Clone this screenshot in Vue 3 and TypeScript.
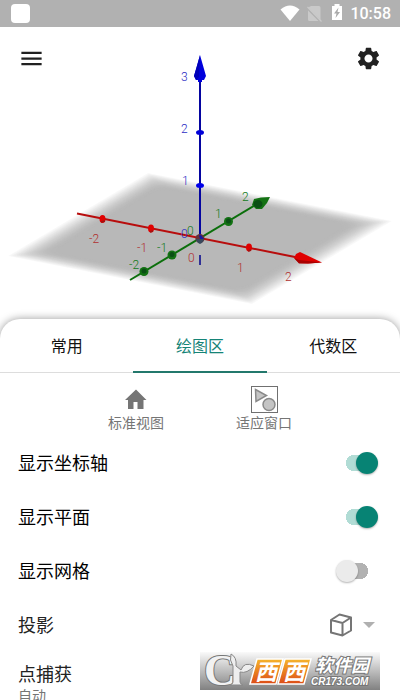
<script setup lang="ts">
import { ref } from 'vue'

interface Tick { x: number; y: number; text: string; axis: string }
interface Layer { inset: number; size: number; radius: number; fill: string }
interface Toggle { id: string; label: string; on: boolean }

const tabs = ['常用', '绘图区', '代数区']
const activeTab = ref(1)

const toggles = ref<Toggle[]>([
  { id: 'axes', label: '显示坐标轴', on: true },
  { id: 'plane', label: '显示平面', on: true },
  { id: 'grid', label: '显示网格', on: false },
])

const ticks: Tick[] = [
  { x: 181, y: 81, text: '3', axis: 'z' },
  { x: 181, y: 133, text: '2', axis: 'z' },
  { x: 182, y: 185, text: '1', axis: 'z' },
  { x: 181, y: 238, text: '0', axis: 'z' },
  { x: 187, y: 235, text: '0', axis: 'y' },
  { x: 215, y: 218, text: '1', axis: 'y' },
  { x: 242, y: 201, text: '2', axis: 'y' },
  { x: 157, y: 252, text: '-1', axis: 'y' },
  { x: 129, y: 269, text: '-2', axis: 'y' },
  { x: 89, y: 243, text: '-2', axis: 'x' },
  { x: 137, y: 252, text: '-1', axis: 'x' },
  { x: 188, y: 262, text: '0', axis: 'x' },
  { x: 237, y: 272, text: '1', axis: 'x' },
  { x: 285, y: 281, text: '2', axis: 'x' },
]

// The plane fades to white at its border through nested layers.
const steps = 24
const layers: Layer[] = Array.from({ length: steps }, (_, k) => {
  const t = (k + 1) / steps
  const inset = k * 0.5
  const grey = Math.round(255 - 71 * Math.sin((t * Math.PI) / 2))
  return { inset, size: 100 - inset * 2, radius: k * 0.25, fill: `rgb(${grey},${grey},${grey})` }
})
</script>

<template>
  <div class="app">
    <div class="status">
      <span class="notice"></span>
      <svg class="signals" viewBox="280 0 64 27" aria-hidden="true">
        <path d="M280.500 9.500Q290 1.500 299.500 9.500L290 21Z" fill="#fff" />
        <path d="M311 6h8q1.500 0 1.500 1.500V20L308 7.500ZM308 10.500L318.500 21H309.500Q308 21 308 19.500Z" fill="#c9c9c9" />
        <path d="M307.500 7L321.500 21.500" stroke="#c9c9c9" stroke-width="1.200" />
        <path d="M334.500 4h5v2h2.500v14h-10V6h2.500z" fill="#fff" />
        <path d="M338.500 7.500L334 13.500h2.500L335.500 18L340 12h-2.500z" fill="#aaa" />
      </svg>
      <time>10:58</time>
    </div>

    <div class="view">
      <svg class="scene" viewBox="0 27 400 292" role="img" aria-label="3D">
        <g transform="matrix(1.4 -0.83 2.44 0.48 8 256)">
          <rect v-for="(l, i) in layers" :key="i" :x="l.inset" :y="l.inset" :width="l.size" :height="l.size" :rx="l.radius" :fill="l.fill" />
        </g>
        <path d="M200 255V265" stroke="#2f2f96" stroke-width="2" />
        <path d="M77 213.500L300 258" stroke="#b80d0d" stroke-width="2" />
        <path d="M130 280L262 201" stroke="#0b6f0b" stroke-width="2" />
        <g fill="#e00000">
          <ellipse cx="102.500" cy="219" rx="3" ry="4" />
          <ellipse cx="151" cy="228.500" rx="3" ry="4" />
          <ellipse cx="249" cy="247.500" rx="3" ry="4" />
          <path d="M300 252L322 262.500L308 263.500L299 263L294 258L296 254Z" />
        </g>
        <path d="M294 258L299 260L322 262.500L308 263.500H299Z" fill="#a90000" />
        <path d="M101 222l4-1M150 232l3-1M248 251l3-1" stroke="#9d1414" stroke-width="1.500" />
        <g fill="#137213">
          <circle cx="144" cy="271.500" r="4.500" />
          <circle cx="172" cy="255" r="4.500" />
          <circle cx="228.500" cy="221.500" r="4.500" />
          <path d="M252 205L254 199L261 197.500L270 197L267 203L262 209H256Z" />
        </g>
        <g fill="#0b4f15">
          <circle cx="144" cy="271" r="2.500" />
          <circle cx="172" cy="254.500" r="2.500" />
          <circle cx="228.500" cy="221" r="2.500" />
          <ellipse cx="258" cy="204" rx="4.500" ry="4" />
        </g>
        <path d="M200 78V238" stroke="#0505a0" stroke-width="2" />
        <circle cx="200" cy="238.500" r="4.500" fill="#663238" />
        <path d="M196 239h8q-1 4-4 5q-3-1-4-5" fill="#38485c" />
        <path d="M199 235h2l3 4h-4z" fill="#1717a0" />
        <path d="M200 55L206 76L204 80H202V82H198V80H196L194 76Z" fill="#0000dc" />
        <path d="M200 55L197 66L194 76L196 80L199 77Z" fill="#0000b8" />
        <ellipse cx="200" cy="132.500" rx="4" ry="2.500" fill="#0000d8" />
        <ellipse cx="200" cy="185.500" rx="4" ry="2.500" fill="#0000e8" />
        <text v-for="(t, i) in ticks" :key="i" :x="t.x" :y="t.y" :class="['tick', t.axis]">{{ t.text }}</text>
      </svg>
      <header class="toolbar">
        <button type="button" aria-label="菜单">
          <svg viewBox="0 0 24 24"><path d="M3 18h18v-2H3v2zm0-5h18v-2H3v2zm0-7v2h18V6H3z" /></svg>
        </button>
        <button type="button" aria-label="设置">
          <svg viewBox="0 0 24 24"><path d="M19.140 12.940c.040-.300.060-.610.060-.940 0-.320-.020-.640-.070-.940l2.030-1.580c.180-.140.230-.410.120-.610l-1.920-3.320c-.120-.220-.370-.290-.590-.220l-2.390.960c-.500-.380-1.030-.700-1.620-.940l-.360-2.540c-.040-.240-.240-.410-.480-.410h-3.840c-.240 0-.430.170-.470.410l-.360 2.540c-.590.240-1.130.570-1.620.940l-2.390-.960c-.220-.080-.470 0-.590.220L2.740 8.870c-.120.210-.080.470.120.610l2.030 1.580c-.050.300-.090.630-.090.940s.020.640.070.940l-2.030 1.580c-.180.140-.230.410-.120.610l1.920 3.320c.120.220.370.290.590.220l2.390-.960c.500.380 1.030.700 1.620.940l.360 2.540c.050.240.240.410.480.410h3.840c.240 0 .440-.170.470-.410l.360-2.540c.590-.240 1.130-.560 1.620-.940l2.390.960c.220.080.470 0 .590-.220l1.920-3.320c.120-.220.070-.470-.120-.610l-2.010-1.580zM12 15.600c-1.980 0-3.600-1.620-3.600-3.600s1.620-3.600 3.600-3.600 3.600 1.620 3.600 3.600-1.620 3.600-3.600 3.600z" /></svg>
        </button>
      </header>
    </div>

    <main class="sheet">
      <div class="tabs" role="tablist">
        <button v-for="(tab, i) in tabs" :key="tab" type="button" role="tab" :aria-selected="activeTab === i" :class="{ active: activeTab === i }" @click="activeTab = i">{{ tab }}</button>
      </div>

      <div class="actions">
        <button type="button">
          <svg viewBox="0 0 27 27"><path d="M10.500 23v-7h4v7h6v-9h3L13 3.500 2 14h3v9z" fill="#757575" /></svg>
          <span>标准视图</span>
        </button>
        <button type="button">
          <svg viewBox="0 0 27 27" fill="#c4c4c4" stroke="#8a8a8a">
            <rect x=".5" y=".5" width="26" height="26" fill="#fff" stroke="#707070" />
            <path d="M4.500 3.500L15.500 9.500L5 15.500Z" stroke-width="1.500" />
            <circle cx="18" cy="18.500" r="6" stroke-width="1.500" />
          </svg>
          <span>适应窗口</span>
        </button>
      </div>

      <div v-for="item in toggles" :key="item.id" class="row">
        <label :for="item.id">{{ item.label }}</label>
        <input :id="item.id" v-model="item.on" class="switch" type="checkbox" role="switch" />
      </div>
      <div class="row">
        <span id="projection" class="soft">投影</span>
        <button class="picker" type="button" aria-haspopup="menu" aria-labelledby="projection">
          <svg class="cube" viewBox="0 0 24 24" fill="none" stroke="#757575" stroke-width="2" stroke-linejoin="round">
            <path d="M2 7L10.500 1.500L22 4.500V17.500L13.500 22.500L2 19.500ZM2 7L13.500 10L22 4.500M13.500 10V22.500" />
          </svg>
          <svg class="caret" viewBox="0 0 12 6"><path d="M0 0h12L6 6z" fill="#b0b0b0" /></svg>
        </button>
      </div>
      <button class="capture" type="button">
        <span class="soft">点捕获</span>
        <small>自动</small>
      </button>
    </main>

    <svg class="badge" viewBox="0 0 180 38" role="img" aria-label="西西软件园">
      <defs>
        <linearGradient id="badge-bg" x1="0" y1="0" x2="0" y2="1">
          <stop offset="0" stop-color="#fafafa" />
          <stop offset=".5" stop-color="#bdbdbd" />
          <stop offset="1" stop-color="#818181" />
        </linearGradient>
        <linearGradient id="badge-hot" x1="0" y1="0" x2="0" y2="1">
          <stop offset="0" stop-color="#f6b52c" />
          <stop offset="1" stop-color="#dc4b16" />
        </linearGradient>
      </defs>
      <path d="M0 0H180V38H0Z" fill="url(#badge-bg)" />
      <text x="4" y="33" class="badge-mark">C</text>
      <path d="M31 2Q37 5 36 14L41 18Q44 9 54 14Q47 22 40 20V30Q40 32 43 33H30Q33 32 33 30V14Q29 8 31 2Z" fill="#eee" stroke="#888" />
      <g fill="url(#badge-hot)" stroke="#fff" stroke-width="1.500">
        <path d="M57 7H83L76 32H50Z" /><path d="M85 7H111L104 32H78Z" />
      </g>
      <text x="55" y="28" class="badge-west">西</text>
      <text x="83" y="28" class="badge-west">西</text>
      <text x="115" y="20" class="badge-name">软件园</text>
      <text x="111" y="33" class="badge-site">CR173.COM</text>
    </svg>
  </div>
</template>

<style>
body { margin: 0; background: #fff; }
</style>

<style scoped>
.app {
  position: relative;
  display: flex;
  flex-direction: column;
  height: 100vh;
  overflow: hidden;
  font-family: Roboto, "Noto Sans CJK SC", sans-serif;
  color: #111;
}
button {
  padding: 0;
  border: 0;
  background: none;
  font: inherit;
  color: inherit;
  cursor: pointer;
}
svg { display: block; }
.status {
  display: flex;
  flex: none;
  align-items: center;
  height: 27px;
  padding: 0 9px 0 11px;
  background: #b1b1b1;
}
.notice {
  width: 19px;
  height: 19px;
  margin-right: auto;
  border-radius: 4px;
  background: #fff;
}
.signals { width: 64px; height: 27px; margin-right: 6px; }
time { font-size: 16px; font-weight: 500; line-height: 27px; color: #fff; }
.view { display: grid; flex: none; }
.view > * { grid-area: 1 / 1; }
.scene { width: 100%; }
.tick { font: 300 12px Roboto, sans-serif; }
.x { fill: #b03030; }
.y { fill: #127a1a; }
.z { fill: #2c2cc4; }
.toolbar {
  display: flex;
  align-items: flex-start;
  justify-content: space-between;
  padding: 18px;
}
.toolbar svg { width: 27px; height: 27px; fill: #212121; }
.sheet {
  flex: 1;
  min-height: 0;
  overflow: hidden;
  border-radius: 20px 20px 0 0;
  background: #fff;
  box-shadow: 0 0 8px rgba(0, 0, 0, 0.4);
}
.tabs {
  display: grid;
  grid-template-columns: repeat(3, 1fr);
  height: 54px;
  box-shadow: inset 0 -1px #ddd;
}
.tabs button { border-bottom: 2px solid transparent; font-size: 16px; }
.tabs .active { border-color: #23786c; color: #168477; }
.actions {
  display: flex;
  justify-content: center;
  padding: 13px 0 3px;
}
.actions button {
  display: flex;
  flex-direction: column;
  align-items: center;
  width: 128px;
  font-size: 14px;
  line-height: 20px;
  color: #757575;
}
.actions svg { width: 27px; height: 27px; }
.row {
  display: flex;
  align-items: center;
  justify-content: space-between;
  height: 54px;
  padding: 0 22px 0 18px;
  font-size: 18px;
}
.row label,
.row .soft { padding-bottom: 2px; }
.row label { color: #000; }
.soft { color: #222; }
.switch {
  appearance: none;
  display: flex;
  align-items: center;
  width: 42px;
  height: 22px;
  margin: 0;
  background: linear-gradient(#b2b2b2, #b2b2b2) center / 10px 16px no-repeat,
    radial-gradient(circle at 24px 50%, #b2b2b2 8px, transparent 8px);
}
.switch::before {
  content: "";
  width: 22px;
  height: 22px;
  border-radius: 50%;
  background: #ebebeb;
  box-shadow: 0 1px 2px rgba(0, 0, 0, 0.3);
}
.switch:checked {
  justify-content: flex-end;
  background: linear-gradient(#b1dcd5, #b1dcd5) center / 10px 16px no-repeat,
    radial-gradient(circle at 18px 50%, #b1dcd5 8px, transparent 8px);
}
.switch:checked::before { background: #078374; }
.picker { display: flex; align-items: center; gap: 10px; padding-right: 3px; }
.cube { width: 24px; height: 24px; }
.caret { width: 12px; height: 6px; }
.capture {
  display: flex;
  flex-direction: column;
  align-items: flex-start;
  padding: 10px 18px;
  font-size: 18px;
  line-height: 26px;
}
.capture small { font-size: 14px; line-height: 16px; color: #757575; }
.badge { position: absolute; right: 20px; bottom: 10px; width: 180px; height: 38px; }
.badge-mark {
  font: bold 44px "Liberation Serif", serif;
  fill: #f2f2f2;
  stroke: #777;
  stroke-width: 2px;
  paint-order: stroke;
}
.badge-west { font: italic bold 22px "Noto Sans CJK SC", sans-serif; fill: #fff; }
.badge-name,
.badge-site {
  font: italic bold 18px "Noto Sans CJK SC", sans-serif;
  fill: #fff;
  stroke: #777;
  stroke-width: 2px;
  paint-order: stroke;
}
.badge-site { font: italic bold 10px "Liberation Sans", sans-serif; }
</style>
